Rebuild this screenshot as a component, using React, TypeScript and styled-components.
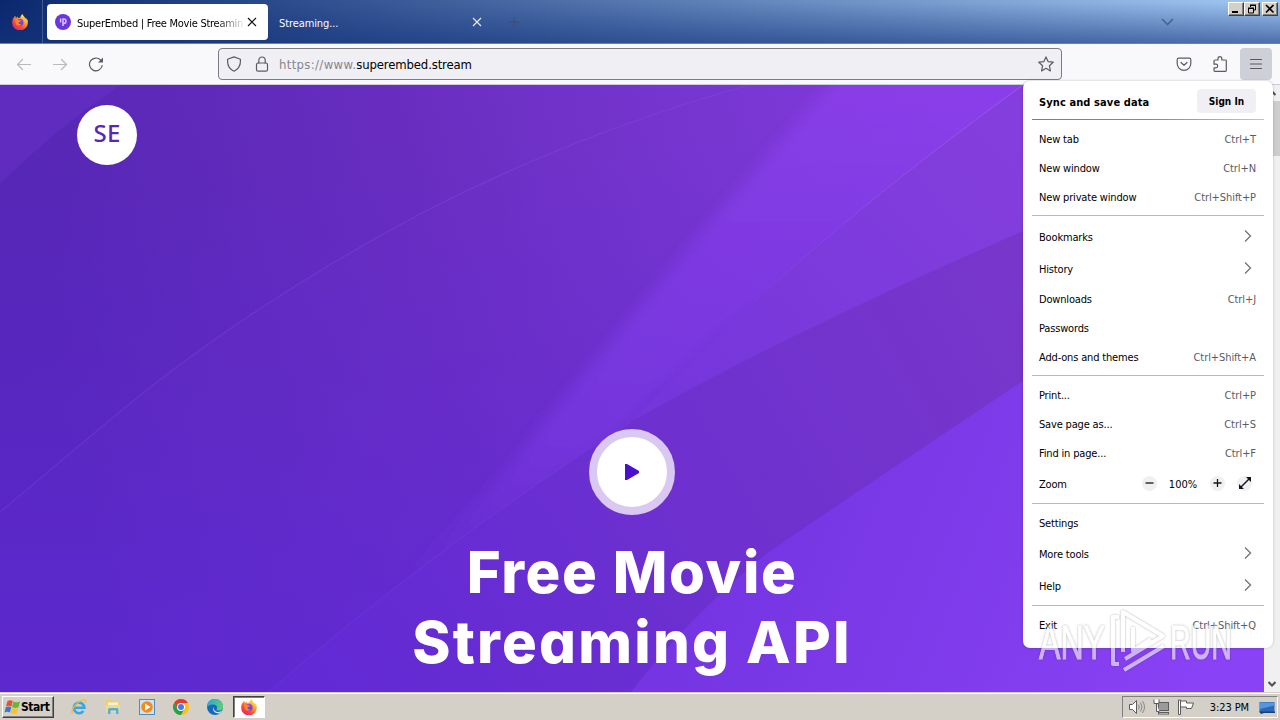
import React from 'react';
import styled, { createGlobalStyle } from 'styled-components';

const GlobalStyle = createGlobalStyle`
  * { box-sizing: border-box; }
  body {
    margin: 0;
    overflow: hidden;
    font-family: 'DejaVu Sans Condensed', 'DejaVu Sans', sans-serif;
    font-stretch: condensed;
    font-size: 11px;
    color: #000;
  }
  svg { display: block; flex: none; }
`;

/* ---------- icons ---------- */

const FirefoxIcon = () => (
  <svg width="16" height="16" viewBox="0 0 16 16">
    <defs>
      <linearGradient id="ffBody" x1="0.85" y1="0.1" x2="0.2" y2="0.95">
        <stop offset="0" stopColor="#fff04a" />
        <stop offset="0.35" stopColor="#ffa02b" />
        <stop offset="0.65" stopColor="#ff4b3a" />
        <stop offset="1" stopColor="#e3206d" />
      </linearGradient>
      <linearGradient id="ffGlobe" x1="0.5" y1="0" x2="0.5" y2="1">
        <stop offset="0" stopColor="#a44be8" />
        <stop offset="1" stopColor="#5b3fc4" />
      </linearGradient>
    </defs>
    <path
      d="M15.6 6.2c-.4-1-1.3-2-1.9-2.3.4.9.6 1.5.7 2C13.4 3.7 11.5 2.8 10.5.1 9.2.9 8.5 2.5 8.4 3.5c-.9 0-1.7.3-2.4.7-.2-.3-.2-1 0-1.6-.9.4-1.6 1-2.1 1.6C3.5 3.7 3.5 2.1 3.6 1.8 2.3 2.5.3 4.7.2 8.3a7.8 7.8 0 0 0 15.6.6c.1-1 .1-1.9-.2-2.7z"
      fill="url(#ffBody)"
    />
    <circle cx="8" cy="8.3" r="3.5" fill="url(#ffGlobe)" />
    <path d="M3.2 5.5c1.3-.5 2.5 0 3.3.8 1 0 2 .1 2 .6-.2.7-1.5.9-2 1.5-.2 1.6 1.7 2.2 3 1.5-1 2.1-4.2 2.2-5.5 0-.8-1.4-.9-3-.8-4.400z" fill="#ff8a24" />
  </svg>
);

const SiteIcon = () => (
  <svg width="16" height="16" viewBox="0 0 16 16">
    <circle cx="8" cy="8" r="8" fill="#6c35dd" />
    <path d="M5.600 4.500v4M8 12V5h.8a2.200 2.200 0 0 1 0 4.400" fill="none" stroke="#d9c8ff" strokeWidth="1.500" />
  </svg>
);

const CloseIcon = ({ color }: { color: string }) => (
  <svg width="10" height="10" viewBox="0 0 10 10" stroke={color} strokeWidth="1.2">
    <path d="M1 1l8 8M9 1l-8 8" />
  </svg>
);

const Icon = styled.svg<{ $muted?: boolean }>`
  fill: none;
  stroke: ${(p) => (p.$muted ? '#b9b9c0' : '#5b5b66')};
  stroke-width: 1.2;
  stroke-linecap: round;
  stroke-linejoin: round;
`;

const BackIcon = () => (
  <Icon $muted width="16" height="16" viewBox="0 0 16 16">
    <path d="M14.5 8.5h-13M6.500 3.500l-5 5 5 5" />
  </Icon>
);

const ForwardIcon = () => (
  <Icon $muted width="16" height="16" viewBox="0 0 16 16">
    <path d="M1.5 8.5h13M9.500 3.500l5 5-5 5" />
  </Icon>
);

const ReloadIcon = () => (
  <Icon width="16" height="16" viewBox="0 0 16 16">
    <path d="M14.200 9.500A6.400 6.400 0 1 1 12.700 4.200" />
    <path d="M15 1.500v5h-5z" fill="#5b5b66" stroke="none" />
  </Icon>
);

const ShieldIcon = () => (
  <Icon width="16" height="16" viewBox="0 0 16 16">
    <path d="M8 .9l6.400 2.300v2.400c0 4.400-2.700 7.900-6.400 9.600C4.300 13.500 1.600 10 1.600 5.600V3.200z" />
  </Icon>
);

const LockIcon = () => (
  <Icon width="14" height="16" viewBox="0 0 14 16">
    <rect x="1.500" y="7" width="11" height="8.200" rx="1.500" />
    <path d="M3.800 7V4.200a3.200 3.200 0 0 1 6.400 0V7" />
  </Icon>
);

const StarIcon = () => (
  <Icon width="16" height="16" viewBox="0 0 16 16">
    <path d="M8 .9l2.100 4.700 5.100.6-3.800 3.500 1 5.200L8 12.300l-4.400 2.600 1-5.200L.8 6.200l5.100-.6z" />
  </Icon>
);

const PocketIcon = () => (
  <Icon width="16" height="16" viewBox="0 0 16 16">
    <path d="M2.700 2.200h10.600a1.500 1.500 0 0 1 1.500 1.500v3.800a6.800 6.800 0 0 1-13.600 0V3.700a1.500 1.500 0 0 1 1.500-1.500z" />
    <path d="M5 6.500L8 9.200l3-2.700" />
  </Icon>
);

const PuzzleIcon = () => (
  <Icon width="16" height="16" viewBox="0 0 16 16">
    <path d="M2 5.500V5A1 1 0 0 1 3 4h3V2.600a1.900 1.900 0 0 1 3.800 0V4h3.700a.8.8 0 0 1 .8.8v9.700a.8.8 0 0 1-.8.8H2.800a.8.8 0 0 1-.8-.8v-2.700h1.900a1.800 1.800 0 0 0 0-3.600H2z" />
  </Icon>
);

const MenuIcon = () => (
  <Icon width="14" height="12" viewBox="0 0 14 12">
    <path d="M1.500 1.500h11M1.500 6h11M1.500 10.500h11" />
  </Icon>
);

const ChevronIcon = () => (
  <svg width="8" height="14" viewBox="0 0 8 14" fill="none" stroke="#77777c" strokeWidth="1.400">
    <path d="M1 1.500L6.500 7 1 12.500" />
  </svg>
);

/* ---------- window frame ---------- */

const Screen = styled.div`
  position: relative;
  display: flex;
  flex-direction: column;
  width: 1280px;
  height: 720px;
  overflow: hidden;
  background: #d4d0c8;
`;

const TitleBar = styled.div`
  display: flex;
  height: 44px;
  border-bottom: 1px solid #7080a0;
  background:
    linear-gradient(180deg, rgba(20, 52, 120, 0) 5%, rgba(20, 52, 125, 0.6) 100%),
    linear-gradient(90deg, #0b286e 0%, #a2c8f3 100%);
`;

const AppBadge = styled.div`
  display: flex;
  align-items: center;
  justify-content: center;
  width: 43px;
  padding-right: 3px;
  border-right: 1px solid #42598f;
`;

const Tab = styled.div<{ $active?: boolean }>`
  display: flex;
  align-items: center;
  width: ${(p) => (p.$active ? 221 : 224)}px;
  height: 36px;
  margin: 4px 0 0 ${(p) => (p.$active ? 4 : 0)}px;
  padding: 0 ${(p) => (p.$active ? '11px 0 8px' : '10px 0 11px')};
  border-radius: 4px;
  color: ${(p) => (p.$active ? '#000' : '#fbfbfe')};
  background: ${(p) => (p.$active ? '#fff' : 'transparent')};
`;

const TabTitle = styled.span<{ $fade?: boolean }>`
  flex: 1;
  overflow: hidden;
  white-space: nowrap;
  margin: 2px 4px 0 ${(p) => (p.$fade ? 6 : 0)}px;
  letter-spacing: ${(p) => (p.$fade ? -0.26 : -0.1)}px;
  ${(p) => p.$fade && 'mask-image: linear-gradient(90deg, #000 84%, transparent 102%);'}
`;

const NewTab = styled.div`
  display: flex;
  align-items: center;
  padding-left: 17px;
`;

const ListTabs = styled.div`
  display: flex;
  align-items: center;
  margin-left: auto;
  padding-right: 54px;
`;

const Caption = styled.div`
  display: flex;
  padding: 2px 2px 0 0;
`;

const CaptionButton = styled.div<{ $gap?: boolean }>`
  display: flex;
  align-items: center;
  justify-content: center;
  width: 16px;
  height: 14px;
  margin-left: ${(p) => (p.$gap ? 2 : 0)}px;
  background: #d4d0c8;
  border: 1px solid;
  border-color: #fff #404040 #404040 #fff;
  box-shadow: inset -1px -1px 0 #808080;
`;

/* ---------- toolbar ---------- */

const Toolbar = styled.div`
  display: flex;
  align-items: center;
  height: 41px;
  padding: 0 8px 0 16px;
  background: #f9f9fb;
  border-bottom: 1px solid #cfcbdc;
`;

const NavButtons = styled.div`
  display: flex;
  gap: 20px;
  width: 202px;
`;

const UrlBar = styled.div`
  display: flex;
  align-items: center;
  width: 844px;
  height: 32px;
  padding: 0 7px;
  border: 1px solid #7b7b82;
  border-radius: 4px;
  background: #f0f0f4;
`;

const UrlText = styled.span`
  flex: 1;
  margin-left: 10px;
  font-size: 13px;
  letter-spacing: -0.14px;
  color: #000;
`;

const UrlPrefix = styled.span`
  color: #85858c;
  letter-spacing: 0.34px;
`;

const LockSlot = styled.div`
  margin-left: 13px;
`;

const ToolbarEnd = styled.div`
  display: flex;
  align-items: center;
  gap: 20px;
  margin-left: auto;
`;

const MenuButton = styled.div`
  display: flex;
  align-items: center;
  justify-content: center;
  width: 32px;
  height: 32px;
  margin-left: -8px;
  border-radius: 4px;
  background: #cfcfd8;
`;

/* ---------- page ---------- */

const Content = styled.div`
  display: flex;
  height: 607px;
`;

const Page = styled.div`
  position: relative;
  width: 1264px;
  height: 607px;
  overflow: hidden;
`;

const Backdrop = styled.svg`
  position: absolute;
  inset: 0;
`;

const Hero = styled.div`
  position: relative;
  display: flex;
  flex-direction: column;
  align-items: center;
`;

const Logo = styled.div`
  align-self: flex-start;
  width: 60px;
  height: 60px;
  margin: 20px 0 0 77px;
  border-radius: 50%;
  background: #fff;
  color: #5626bd;
  font: 500 24px/56px 'Noto Sans', sans-serif;
  letter-spacing: 0.3px;
  text-align: center;
`;

const PlayButton = styled.div`
  display: flex;
  align-items: center;
  justify-content: center;
  width: 86px;
  height: 86px;
  margin-top: 264px;
  border: 8px solid #d9c8f1;
  border-radius: 50%;
  background: #fff;
`;

const Headline = styled.h1`
  margin: 22px 0 0;
  font: 800 58px/70px Inter, sans-serif;
  font-feature-settings: 'cv11';
  color: #fff;
  text-align: center;
  white-space: nowrap;
`;

const HeadLine = styled.div<{ $spacing: number }>`
  letter-spacing: ${(p) => p.$spacing}px;
`;

const ScrollBar = styled.div`
  display: flex;
  flex-direction: column;
  align-items: center;
  justify-content: space-between;
  width: 16px;
  padding: 5px 0;
  background: linear-gradient(#cdcdcd, #cdcdcd) 0 16px / 16px 55px no-repeat #f0f0f0;
`;

const PageBackdrop = () => (
  <Backdrop width="1264" height="607" viewBox="0 0 1264 607">
    <defs>
      <linearGradient id="base" gradientUnits="userSpaceOnUse" x1="30" y1="200" x2="1000" y2="0">
        <stop offset="0" stopColor="#5828b6" />
        <stop offset="0.4" stopColor="#692ec0" />
        <stop offset="0.72" stopColor="#7836d1" />
        <stop offset="1" stopColor="#863ce4" />
      </linearGradient>
      <linearGradient id="left" gradientUnits="userSpaceOnUse" x1="520" y1="60" x2="60" y2="380">
        <stop offset="0" stopColor="#5020b0" stopOpacity="0" />
        <stop offset="1" stopColor="#4c20b0" stopOpacity="0.25" />
      </linearGradient>
      <linearGradient id="low" gradientUnits="userSpaceOnUse" x1="0" y1="60" x2="0" y2="607">
        <stop offset="0" stopColor="#6028e4" stopOpacity="0" />
        <stop offset="1" stopColor="#6028e4" stopOpacity="0.55" />
      </linearGradient>
      <linearGradient id="beam" gradientUnits="userSpaceOnUse" x1="0" y1="0" x2="0" y2="500">
        <stop offset="0" stopColor="#8c40ec" stopOpacity="0.7" />
        <stop offset="0.5" stopColor="#7d3ae4" stopOpacity="0.75" />
        <stop offset="0.72" stopColor="#7838e2" stopOpacity="0.65" />
        <stop offset="1" stopColor="#7034e0" stopOpacity="0" />
      </linearGradient>
      <linearGradient id="slab" gradientUnits="userSpaceOnUse" x1="980" y1="20" x2="640" y2="340">
        <stop offset="0" stopColor="#843edd" />
        <stop offset="1" stopColor="#7435db" />
      </linearGradient>
      <linearGradient id="edge" gradientUnits="userSpaceOnUse" x1="1023" y1="0" x2="723" y2="246">
        <stop offset="0" stopColor="#a860f4" stopOpacity="0.7" />
        <stop offset="1" stopColor="#a860f4" stopOpacity="0" />
      </linearGradient>
      <linearGradient id="dark" gradientUnits="userSpaceOnUse" x1="1023" y1="200" x2="330" y2="600">
        <stop offset="0" stopColor="#7836cb" />
        <stop offset="0.55" stopColor="#6c30d0" />
        <stop offset="1" stopColor="#622ad5" />
      </linearGradient>
      <linearGradient id="corner" gradientUnits="userSpaceOnUse" x1="740" y1="420" x2="1200" y2="600">
        <stop offset="0" stopColor="#7535e2" />
        <stop offset="1" stopColor="#8942f5" />
      </linearGradient>
      <filter id="soft" x="-10%" y="-10%" width="120%" height="120%">
        <feGaussianBlur stdDeviation="7" />
      </filter>
    </defs>
    <rect width="1264" height="607" fill="url(#base)" />
    <path d="M0 0H749Q572 50 420 129Q240 225 105 339Q50 385 0 427Z" fill="url(#left)" />
    <path d="M0 0H121Q60 40 0 99Z" fill="#6c35cc" opacity="0.4" />
    <path d="M749 0Q572 50 420 129Q240 225 105 339Q50 385 0 427" fill="none" stroke="#8a4ce0" strokeWidth="1.2" opacity="0.4" />
    <rect width="1264" height="607" fill="url(#low)" />
    <path d="M848 -20H1100L723 246L631 337L300 607H240Q440 480 545 337Q730 110 848 -20Z" fill="url(#beam)" filter="url(#soft)" />
    <path d="M1023 0Q850 125 723 246Q670 296 631 337Q780 252 1023 146Z" fill="url(#slab)" />
    <path d="M1023 0Q850 125 723 246" fill="none" stroke="url(#edge)" />
    <path d="M1264 50L1023 146Q780 252 631 337Q430 465 269 607H1264Z" fill="url(#dark)" />
    <path d="M631 337Q430 465 269 607" fill="none" stroke="#8750e8" opacity="0.25" />
    <path d="M1264 120L1023 296Q867 400 769 467Q690 530 631 607H1264Z" fill="url(#corner)" />
  </Backdrop>
);

/* ---------- app menu ---------- */

const Menu = styled.div`
  position: absolute;
  left: 1023px;
  top: 81px;
  width: 250px;
  height: 567px;
  padding: 0 9px;
  border-radius: 7px;
  background: #fff;
  box-shadow: 0 0 3px rgba(0, 0, 0, 0.22);
`;

const SyncRow = styled.div`
  display: flex;
  align-items: center;
  justify-content: space-between;
  height: 38px;
  padding: 2px 8px 0 7px;
  font-weight: 700;
  letter-spacing: 0.1px;
`;

const SyncLabel = styled.span`
  padding-top: 2px;
`;

const SignIn = styled.div`
  width: 59px;
  height: 24px;
  border-radius: 4px;
  background: #f0f0f4;
  font-size: 10px;
  letter-spacing: 0;
  line-height: 25px;
  text-align: center;
`;

const Rainbow = styled.div`
  height: 1px;
  margin-bottom: 5px;
  background: linear-gradient(90deg, #9059ff 0%, #ff4aa2 52%, #ffbd4f 100%);
`;

const MenuRow = styled.div<{ $tall?: boolean }>`
  display: flex;
  align-items: center;
  justify-content: space-between;
  height: ${(p) => (p.$tall ? 32 : 29)}px;
  padding: 0 8px 0 7px;
  letter-spacing: -0.17px;
`;

const Shortcut = styled.span`
  color: #5b5b66;
  letter-spacing: -0.08px;
`;

const ChevronSlot = styled.div`
  padding: 0 4px 2px 0;
`;

const Divider = styled.div`
  height: 1px;
  margin: 3px 0 5px;
  background: #b9b9bb;
`;

const ZoomControls = styled.div`
  display: flex;
  align-items: center;
  padding-right: 4px;
`;

const ZoomValue = styled.span`
  width: 53px;
  padding-right: 1px;
  letter-spacing: 0;
  text-align: center;
`;

const ZoomButton = styled.div<{ $gap?: boolean }>`
  display: flex;
  align-items: center;
  justify-content: center;
  width: 15px;
  height: 15px;
  margin: -2px 0 0 ${(p) => (p.$gap ? 12 : 0)}px;
  border-radius: 50%;
  background: #f0f0f2;
`;

type Item = { label: string; keys?: string; sub?: boolean; zoom?: boolean };

const groups: Item[][] = [
  [
    { label: 'New tab', keys: 'Ctrl+T' },
    { label: 'New window', keys: 'Ctrl+N' },
    { label: 'New private window', keys: 'Ctrl+Shift+P' },
  ],
  [
    { label: 'Bookmarks', sub: true },
    { label: 'History', sub: true },
    { label: 'Downloads', keys: 'Ctrl+J' },
    { label: 'Passwords' },
    { label: 'Add-ons and themes', keys: 'Ctrl+Shift+A' },
  ],
  [
    { label: 'Print...', keys: 'Ctrl+P' },
    { label: 'Save page as...', keys: 'Ctrl+S' },
    { label: 'Find in page...', keys: 'Ctrl+F' },
    { label: 'Zoom', zoom: true },
  ],
  [
    { label: 'Settings' },
    { label: 'More tools', sub: true },
    { label: 'Help', sub: true },
  ],
  [{ label: 'Exit', keys: 'Ctrl+Shift+Q' }],
];

const Zoom = () => (
  <ZoomControls>
    <ZoomButton>
      <svg width="9" height="9" stroke="#15141a" strokeWidth="1.300"><path d="M.5 4h8" /></svg>
    </ZoomButton>
    <ZoomValue>100%</ZoomValue>
    <ZoomButton>
      <svg width="9" height="9" stroke="#15141a" strokeWidth="1.300"><path d="M.5 4h8M4.500 0v8" /></svg>
    </ZoomButton>
    <ZoomButton $gap>
      <svg width="12" height="12" viewBox="0 0 12 12">
        <path d="M2 10L10 2" stroke="#15141a" strokeWidth="1.500" />
        <path d="M7 0H12v5zM0 7V12h5z" fill="#15141a" />
      </svg>
    </ZoomButton>
  </ZoomControls>
);

const AppMenu = () => (
  <Menu>
    <SyncRow>
      <SyncLabel>Sync and save data</SyncLabel>
      <SignIn>Sign In</SignIn>
    </SyncRow>
    <Rainbow />
    {groups.map((items, i) => (
      <React.Fragment key={i}>
        {i > 0 && <Divider />}
        {items.map((item) => (
          <MenuRow key={item.label} $tall={item.sub || item.zoom}>
            <span>{item.label}</span>
            {item.keys && <Shortcut>{item.keys}</Shortcut>}
            {item.sub && <ChevronSlot><ChevronIcon /></ChevronSlot>}
            {item.zoom && <Zoom />}
          </MenuRow>
        ))}
      </React.Fragment>
    ))}
  </Menu>
);

const WatermarkSvg = styled.svg`
  position: absolute;
  left: 1036px;
  top: 604px;
  filter: drop-shadow(0 0 1px rgba(50, 50, 50, 0.6));
  opacity: 0.6;
`;

const Watermark = () => (
  <WatermarkSvg width="200" height="70" viewBox="0 0 200 70" fontFamily="'Liberation Sans', sans-serif">
    <g fill="#fff" stroke="#fff" strokeWidth="1" fontSize="49">
      <text x="3" y="55" textLength="66" lengthAdjust="spacingAndGlyphs">ANY</text>
      <text x="134" y="55" textLength="62" lengthAdjust="spacingAndGlyphs">RUN</text>
    </g>
    <g fill="none" stroke="#fff" strokeWidth="4" strokeLinejoin="round">
      <path d="M83 13h-6v47h6M87 48V8l40 24-38 23M88 66l40-24" />
      <path d="M97 23v24l18-12" />
    </g>
  </WatermarkSvg>
);

/* ---------- taskbar ---------- */

const Taskbar = styled.div`
  display: flex;
  align-items: center;
  height: 28px;
  padding: 0 2px;
  border-top: 1px solid #d4d0c8;
  box-shadow: inset 0 1px 0 #fff;
  background: #d4d0c8;
`;

const StartButton = styled.div`
  display: flex;
  align-items: center;
  width: 52px;
  height: 22px;
  padding-left: 1px;
  border: 1px solid;
  border-color: #fff #404040 #404040 #fff;
  box-shadow: inset -1px -1px 0 #808080;
  font-size: 12px;
  font-weight: 700;
  letter-spacing: -0.45px;
`;

const Launchers = styled.div`
  display: flex;
  gap: 18px;
  margin: 0 10px 0 17px;
`;

const TaskButton = styled.div`
  display: flex;
  align-items: center;
  justify-content: center;
  width: 32px;
  height: 22px;
  border: 1px solid;
  border-color: #404040 #fff #fff #404040;
  box-shadow: inset 1px 1px 0 #808080;
  background: #fff;
`;

const Tray = styled.div`
  display: flex;
  align-items: center;
  width: 156px;
  height: 22px;
  margin-left: auto;
  padding: 0 2px 0 6px;
  border: 1px solid;
  border-color: #808080 #fff #fff #808080;
`;

const TrayIcons = styled.div`
  display: flex;
  gap: 8px;
`;

const Clock = styled.span`
  margin: 1px 10px 0 auto;
  letter-spacing: -0.1px;
`;

const WindowsFlag = () => (
  <svg width="17" height="16" viewBox="0 0 16 16">
    <path d="M2.800 2.500q2.500-2 5.500-.5L7 7.500q-2.800-1.300-5.500 0z" fill="#e8542a" />
    <path d="M8.900 2.500q3 1.500 6.600 0L14 8.200q-3 1.500-6.400-.3z" fill="#6db33a" />
    <path d="M1.300 8.300q2.700-1.500 5.500-.2L5.400 13.500q-2.700-1.500-5.400 0z" fill="#3a78cf" />
    <path d="M7.400 8.700q3.300 1.700 6.400.3L12.300 14.300q-3 1.500-6.300-.3z" fill="#f7c32c" />
  </svg>
);

const IeIcon = () => (
  <svg width="16" height="16" viewBox="0 0 16 16" fill="none">
    <path d="M3.200 8.800h10.200a5.300 5.300 0 1 0-1 3.200" stroke="#36a7e0" strokeWidth="2.600" />
    <path d="M1.500 14.500C-1 12 5 3.500 11 1.300c4-1.500 4.500.7 3.400 3" stroke="#f0bd37" strokeWidth="1.200" />
  </svg>
);

const FolderIcon = () => (
  <svg width="16" height="16" viewBox="0 0 16 16">
    <path d="M1 1h5l1 1.500h7V13H1z" fill="#ecd070" />
    <path d="M3 3.500h10v3H3z" fill="#fbf4cf" />
    <path d="M1 6h14V13H1z" fill="#efd98a" />
    <path d="M3 15v-4.500q0-1.500 1.500-1.500h7.500q1.500 0 1.500 1.500V15h-2.500v-3.500H5.500V15z" fill="#58addd" />
  </svg>
);

const PlayerIcon = () => (
  <svg width="16" height="16" viewBox="0 0 16 16">
    <rect x="0.500" y="0.500" width="15" height="15" fill="#cfe2ef" stroke="#4c8dc2" />
    <circle cx="8" cy="8" r="5.800" fill="#f58a1c" />
    <path d="M6 4.500L11.500 8 6 11.500z" fill="#fff" />
  </svg>
);

const ChromeIcon = () => (
  <svg width="16" height="16" viewBox="0 0 16 16">
    <circle cx="8" cy="8" r="8" fill="#fbc116" />
    <path d="M8 4h6.930A8 8 0 0 0 1.070 4L4.500 10z" fill="#e33b2e" />
    <path d="M1.070 4A8 8 0 0 0 8 16l3.400-6L8 11.500 4.600 10z" fill="#28a045" />
    <circle cx="8" cy="8" r="4" fill="#fff" />
    <circle cx="8" cy="8" r="3" fill="#3f7de8" />
  </svg>
);

const EdgeIcon = () => (
  <svg width="16" height="16" viewBox="0 0 16 16">
    <defs>
      <linearGradient id="edgeTop" x1="0" y1="0.400" x2="1" y2="0.600">
        <stop offset="0" stopColor="#2aa5dc" />
        <stop offset="1" stopColor="#5fd36a" />
      </linearGradient>
    </defs>
    <circle cx="8" cy="8" r="8" fill="#1668bd" />
    <path d="M0 8a8 8 0 0 1 16-.5c.1 2.800-2 4-4 4-2.200 0-2.800-.8-2.300-1.600C11 7 8.500 5.500 6 5.600 3 5.700.8 7.500 0 8z" fill="url(#edgeTop)" />
    <path d="M7.500 7.500c-1.800 2 .2 5.700 3.700 5.400 1.500-.1 2.800-.7 3.800-1.400-.5 1-1.500 2.300-2.600 3C7.500 14.500 4 11 7.500 7.500z" fill="#cfe6ee" />
  </svg>
);

const trayStroke = { fill: '#fff', stroke: '#5c5c5c' };

const SpeakerIcon = () => (
  <svg width="16" height="16" viewBox="0 0 16 16" {...trayStroke}>
    <path d="M.5 5.500h3l4-4v13l-4-4h-3z" />
    <path d="M9.500 5.500q1.500 2.500 0 5M11.500 3.500q3 4.500 0 9M13.500 2q4 6 0 12" fill="none" stroke="#888" />
  </svg>
);

const NetworkIcon = () => (
  <svg width="17" height="16" viewBox="0 0 17 16" {...trayStroke}>
    <rect x="5.500" y="3.500" width="10" height="8" fill="#9a9a9a" />
    <rect x="5.500" y="13.500" width="10" height="1.500" />
    <path d="M1 .5v4h5v-4M3.500 4.500V12.500h3" fill="#fff" />
  </svg>
);

const FlagIcon = () => (
  <svg width="17" height="16" viewBox="0 0 17 16" {...trayStroke}>
    <path d="M.5 1h2v14.500h-2z" />
    <path d="M2.500 2h6v2h7l-2 5.500H8.500V8h-6z" />
  </svg>
);

const DesktopIcon = () => (
  <svg width="16" height="16" viewBox="0 0 16 16">
    <path d="M.5 3h15v10H.5z" fill="#2b69b8" />
    <path d="M1 3.500h14v3L1 10z" fill="#5596dc" />
    <path d="M0 12.500h16V14H5l-3 1z" fill="#183e78" />
  </svg>
);

const ScrollArrow = ({ up }: { up?: boolean }) => (
  <svg width="8" height="6" viewBox="0 0 8 6" fill="none" stroke="#505050" strokeWidth="2">
    <path d={up ? 'M.5 5L4 1.500 7.500 5' : 'M.5 1L4 4.500 7.500 1'} />
  </svg>
);

export default function App() {
  return (
    <Screen>
      <GlobalStyle />
      <TitleBar>
        <AppBadge><FirefoxIcon /></AppBadge>
        <Tab $active>
          <SiteIcon />
          <TabTitle $fade>SuperEmbed | Free Movie Streaming</TabTitle>
          <CloseIcon color="#15141a" />
        </Tab>
        <Tab>
          <TabTitle>Streaming...</TabTitle>
          <CloseIcon color="#e4eaf6" />
        </Tab>
        <NewTab>
          <svg width="10" height="10" stroke="#3c4c70"><path d="M5 0v10M0 5h10" /></svg>
        </NewTab>
        <ListTabs>
          <svg width="13" height="8" fill="none" stroke="#44608f" strokeWidth="1.500"><path d="M1 1l5.500 5.500L12 1" /></svg>
        </ListTabs>
        <Caption>
          <CaptionButton>
            <svg width="10" height="10"><path d="M1 8h6" stroke="#000" strokeWidth="2" /></svg>
          </CaptionButton>
          <CaptionButton>
            <svg width="10" height="10" fill="none" stroke="#000">
              <path d="M3 1h6M3.500 1v2M8.500 1v5H7M1 4h6M1.500 4v5h5V4" />
              <path d="M3 1.500h6M1 4.500h6" />
            </svg>
          </CaptionButton>
          <CaptionButton $gap>
            <svg width="10" height="10" stroke="#000" strokeWidth="1.700"><path d="M1 1l7.500 7.500M8.500 1L1 8.500" /></svg>
          </CaptionButton>
        </Caption>
      </TitleBar>
      <Toolbar>
        <NavButtons>
          <BackIcon />
          <ForwardIcon />
          <ReloadIcon />
        </NavButtons>
        <UrlBar>
          <ShieldIcon />
          <LockSlot><LockIcon /></LockSlot>
          <UrlText><UrlPrefix>https://www.</UrlPrefix>superembed.stream</UrlText>
          <StarIcon />
        </UrlBar>
        <ToolbarEnd>
          <PocketIcon />
          <PuzzleIcon />
          <MenuButton><MenuIcon /></MenuButton>
        </ToolbarEnd>
      </Toolbar>
      <Content>
        <Page>
          <PageBackdrop />
          <Hero>
            <Logo>SE</Logo>
            <PlayButton>
              <svg width="15" height="16"><path d="M0 0h2l12 7v2L2 16H0z" fill="#4a0fd0" /></svg>
            </PlayButton>
            <Headline>
              <HeadLine $spacing={1.6}>Free Movie</HeadLine>
              <HeadLine $spacing={2.2}>Streaming API</HeadLine>
            </Headline>
          </Hero>
        </Page>
        <ScrollBar>
          <ScrollArrow up />
          <ScrollArrow />
        </ScrollBar>
      </Content>
      <Taskbar>
        <StartButton><WindowsFlag />Start</StartButton>
        <Launchers>
          <IeIcon />
          <FolderIcon />
          <PlayerIcon />
          <ChromeIcon />
          <EdgeIcon />
        </Launchers>
        <TaskButton><FirefoxIcon /></TaskButton>
        <Tray>
          <TrayIcons>
            <SpeakerIcon />
            <NetworkIcon />
            <FlagIcon />
          </TrayIcons>
          <Clock>3:23 PM</Clock>
          <DesktopIcon />
        </Tray>
      </Taskbar>
      <AppMenu />
      <Watermark />
    </Screen>
  );
}
